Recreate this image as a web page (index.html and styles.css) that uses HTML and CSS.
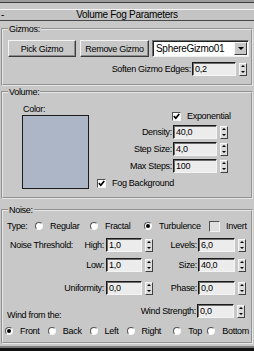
FILE: index.html
```html
<!DOCTYPE html>
<html lang="en">
<head>
    <meta charset="UTF-8">
    <title>Volume Fog Parameters</title>
    <link rel="stylesheet" href="styles.css">
</head>
<body>
    <div class="panel">
        <div class="prev-edge"></div>

        <!-- rollout header -->
        <div class="rollout-title"><span class="minus">-</span>Volume Fog Parameters</div>

        <!-- Gizmos -->
        <fieldset class="group gizmos">
            <legend>Gizmos:</legend>
            <div class="row btn-row">
                <button class="btn pick">Pick Gizmo</button>
                <button class="btn remove">Remove Gizmo</button>
                <div class="dropdown">
                    <span class="drop-text">SphereGizmo01</span>
                    <span class="drop-btn"></span>
                </div>
            </div>
            <div class="row spin-row soften">
                <span class="lbl">Soften Gizmo Edges:</span>
                <span class="field f-wide">0,2</span>
                <span class="spinner"></span>
            </div>
        </fieldset>

        <!-- Volume -->
        <fieldset class="group volume">
            <legend>Volume:</legend>
            <div class="volume-body">
                <div class="color-col">
                    <div class="color-label">Color:</div>
                    <div class="swatch"></div>
                </div>
                <div class="vol-col">
                    <div class="check-row exp">
                        <span class="check"><svg width="7" height="7" viewBox="0 0 7 7"><path d="M0.8 3.2 L2.8 5.2 L6.2 1" stroke="#000" stroke-width="1.7" fill="none"/></svg></span>Exponential
                    </div>
                    <div class="row spin-row">
                        <span class="lbl">Density:</span>
                        <span class="field f-vol">40,0</span>
                        <span class="spinner"></span>
                    </div>
                    <div class="row spin-row">
                        <span class="lbl">Step Size:</span>
                        <span class="field f-vol">4,0</span>
                        <span class="spinner"></span>
                    </div>
                    <div class="row spin-row">
                        <span class="lbl">Max Steps:</span>
                        <span class="field f-vol">100</span>
                        <span class="spinner"></span>
                    </div>
                    <div class="check-row fogbg">
                        <span class="check"><svg width="7" height="7" viewBox="0 0 7 7"><path d="M0.8 3.2 L2.8 5.2 L6.2 1" stroke="#000" stroke-width="1.7" fill="none"/></svg></span>Fog Background
                    </div>
                </div>
            </div>
        </fieldset>

        <!-- Noise -->
        <fieldset class="group noise">
            <legend>Noise:</legend>
            <div class="type-row">
                <span class="type-lbl">Type:</span>
                <span class="opt t-reg"><span class="radio"></span>Regular</span>
                <span class="opt t-frac"><span class="radio"></span>Fractal</span>
                <span class="opt t-turb"><span class="radio on"></span>Turbulence</span>
                <span class="opt"><span class="check off"></span>Invert</span>
            </div>

            <div class="n-row thr">
                <span class="n-left"><span>Noise Threshold:</span><span>High:</span></span>
                <span class="field f-n">1,0</span>
                <span class="spinner"></span>
                <span class="n-right">Levels:</span>
                <span class="field f-n2">6,0</span>
                <span class="spinner"></span>
            </div>
            <div class="n-row low">
                <span class="n-left"><span></span><span>Low:</span></span>
                <span class="field f-n">1,0</span>
                <span class="spinner"></span>
                <span class="n-right">Size:</span>
                <span class="field f-n2">40,0</span>
                <span class="spinner"></span>
            </div>
            <div class="n-row uni">
                <span class="n-left"><span></span><span>Uniformity:</span></span>
                <span class="field f-n">0,0</span>
                <span class="spinner"></span>
                <span class="n-right">Phase:</span>
                <span class="field f-n2">0,0</span>
                <span class="spinner"></span>
            </div>
            <div class="n-row wind">
                <span class="wind-lbl">Wind from the:</span>
                <span class="n-right">Wind Strength:</span>
                <span class="field f-n2">0,0</span>
                <span class="spinner"></span>
            </div>

            <div class="dir-row">
                <span class="opt d-front"><span class="radio on"></span>Front</span>
                <span class="opt d-back"><span class="radio"></span>Back</span>
                <span class="opt d-left"><span class="radio"></span>Left</span>
                <span class="opt d-right"><span class="radio"></span>Right</span>
                <span class="opt d-top"><span class="radio"></span>Top</span>
                <span class="opt"><span class="radio"></span>Bottom</span>
            </div>
        </fieldset>
    </div>
</body>
</html>
```

FILE: styles.css
```css
body {
    margin: 0;
    width: 254px;
    height: 351px;
    overflow: hidden;
    background: #101010;
    font-family: "Liberation Sans", Arial, sans-serif;
    font-size: 9px;
    letter-spacing: -0.3px;
    line-height: 12px;
    white-space: nowrap;
    color: #000;
}

.panel {
    height: 346px;
    background: #c8c8c8;
    border-bottom: 2px solid #7c7c7c;
    overflow: hidden;
}

.prev-edge {
    height: 2px;
    background: #9c9c9c;
    border-bottom: 1px solid #3c3c3c;
}

.rollout-title {
    position: relative;
    margin-top: 6px;
    height: 10px;
    line-height: 10px;
    font-size: 10px;
    border-top: 1px solid #f2f2f2;
    border-bottom: 1px solid #484848;
    background: #c4c4c4;
    text-align: center;
}

.rollout-title .minus {
    position: absolute;
    left: 1px;
    top: 0;
}

/* group boxes */
.group {
    margin: 0 1px;
    padding: 0 2px 0 4px;
    border: 2px groove #e6e6e6;
    min-width: 0;
}

.group legend {
    padding: 0 1px;
    margin-left: 1px;
    line-height: 12px;
}

.gizmos {
    margin-top: 2px;
    padding-top: 5px;
    padding-bottom: 8px;
}

.volume {
    padding-bottom: 8px;
}

.noise {
    margin-top: 5px;
    padding-bottom: 5px;
}

.row {
    display: flex;
    align-items: center;
}

/* buttons + dropdown */
.btn-row {
    height: 17px;
}

.btn {
    height: 17px;
    padding: 0;
    font: inherit;
    letter-spacing: inherit;
    color: #000;
    background: #c8c8c8;
    border: 1px solid;
    border-color: #f4f4f4 #3c3c3c #3c3c3c #f4f4f4;
    box-shadow: inset -1px -1px 0 #8c8c8c;
}

.pick {
    width: 68px;
    margin-left: 1px;
}

.remove {
    width: 69px;
    margin-left: 4px;
}

.dropdown {
    display: flex;
    align-items: center;
    width: 97px;
    height: 17px;
    margin-left: 3px;
    box-sizing: border-box;
    background: #fff;
    border: 1px solid;
    border-color: #6c6c6c #f0f0f0 #f0f0f0 #6c6c6c;
    box-shadow: inset 1px 1px 0 #202020;
}

.drop-text {
    flex: 1;
    padding-left: 3px;
    font-size: 10px;
}

.drop-btn {
    position: relative;
    width: 13px;
    height: 13px;
    margin-right: 1px;
    box-sizing: border-box;
    background: #c8c8c8;
    border: 1px solid;
    border-color: #f4f4f4 #3c3c3c #3c3c3c #f4f4f4;
}

.drop-btn::after {
    content: "";
    position: absolute;
    left: 3px;
    top: 4px;
    border-left: 3px solid transparent;
    border-right: 3px solid transparent;
    border-top: 3px solid #000;
}

/* spinner fields */
.spin-row {
    justify-content: flex-end;
    height: 14px;
}

.spin-row .lbl {
    padding-right: 1px;
}

.soften {
    margin-top: 5px;
    padding-right: 2px;
}

.field {
    height: 12px;
    line-height: 12px;
    padding-left: 2px;
    box-sizing: content-box;
    background: #ececec;
    border: 1px solid;
    border-color: #1a1a1a #f4f4f4 #f4f4f4 #1a1a1a;
    box-shadow: inset 1px 1px 0 #6c6c6c;
}

.f-wide {
    width: 40px;
}

.f-vol {
    width: 40px;
}

.f-n {
    width: 32px;
    margin-left: 1px;
}

.f-n2 {
    width: 33px;
}

.spinner {
    display: flex;
    flex-direction: column;
    justify-content: space-around;
    align-items: center;
    width: 6px;
    height: 11px;
    margin-left: 3px;
    background: #dcdcdc;
    border: 1px solid;
    border-color: #f8f8f8 #404040 #404040 #f8f8f8;
}

.spinner::before {
    content: "";
    border-left: 2px solid transparent;
    border-right: 2px solid transparent;
    border-bottom: 2px solid #000;
}

.spinner::after {
    content: "";
    border-left: 2px solid transparent;
    border-right: 2px solid transparent;
    border-top: 2px solid #000;
}

/* volume */
.volume-body {
    display: flex;
}

.color-col {
    margin-left: 15px;
    padding-top: 5px;
}

.color-label {
    padding-left: 1px;
}

.swatch {
    width: 65px;
    height: 72px;
    background: #adb6c6;
    border: 1px solid #1c1c1c;
}

.vol-col {
    width: 131px;
    margin-left: 8px;
    padding-top: 12px;
}

.vol-col .spin-row {
    margin-top: 3px;
}

.check-row {
    display: flex;
    align-items: center;
}

.exp {
    padding-left: 75px;
}

.fogbg {
    margin-top: 4px;
}

.check {
    display: flex;
    width: 7px;
    height: 7px;
    margin-right: 6px;
    background: #fff;
    border: 1px solid;
    border-color: #505050 #f4f4f4 #f4f4f4 #505050;
}

.check.off {
    width: 9px;
    height: 9px;
    background: #dedede;
}

/* noise */
.type-row,
.dir-row {
    display: flex;
    align-items: center;
    height: 12px;
}

.opt {
    display: flex;
    align-items: center;
}

.type-row {
    margin-top: 4px;
}

.type-lbl {
    width: 28px;
}

.t-reg {
    width: 55px;
}

.t-frac {
    width: 54px;
}

.t-turb {
    width: 65px;
}

.radio {
    position: relative;
    width: 6px;
    height: 6px;
    border-radius: 50%;
    background: #fff;
    border: 1px solid;
    border-color: #555 #f6f6f6 #f6f6f6 #555;
    margin-right: 7px;
}

.radio.on::after {
    content: "";
    position: absolute;
    left: 1px;
    top: 1px;
    width: 4px;
    height: 4px;
    border-radius: 50%;
    background: #000;
}

.n-row {
    display: flex;
    align-items: center;
    height: 14px;
}

.thr {
    margin-top: 6px;
}

.low {
    margin-top: 6px;
}

.uni {
    margin-top: 9px;
}

.wind {
    margin-top: 9px;
}

.n-left {
    display: flex;
    justify-content: space-between;
    width: 98px;
    padding-left: 3px;
    padding-right: 1px;
    box-sizing: border-box;
}

.n-right {
    width: 45px;
    text-align: right;
    padding-right: 1px;
    box-sizing: border-box;
}

.wind-lbl {
    flex: 1;
    align-self: flex-end;
    margin-bottom: -3px;
}

.wind .n-right {
    width: auto;
}

.wind .spinner {
    margin-right: 4px;
}

.dir-row {
    margin-top: 7px;
    margin-left: -2px;
}

.d-front {
    width: 44px;
}

.d-back {
    width: 43px;
}

.d-left {
    width: 38px;
}

.d-right {
    width: 48px;
}

.d-top {
    width: 35px;
}
```
